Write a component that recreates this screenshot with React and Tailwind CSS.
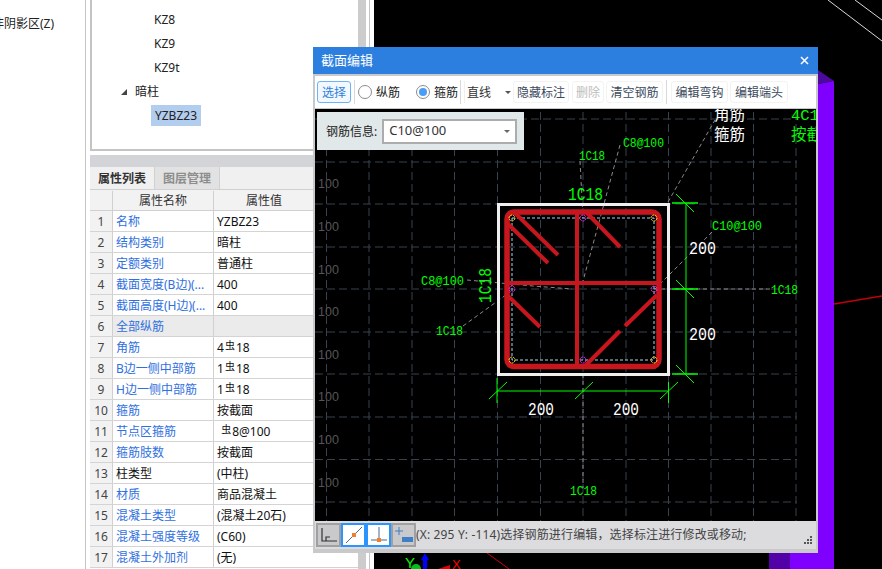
import React from "react";

const sans = "font-['Noto_Sans','Noto_Sans_CJK_SC',sans-serif]";
const cadFont = "'Liberation Mono','Noto Sans CJK SC',monospace";

const Rebar = () => (
  <span className="relative -top-[3px] mx-px text-[10px] leading-none">虫</span>
);

const rows = [
  ["名称", "YZBZ23"],
  ["结构类别", "暗柱"],
  ["定额类别", "普通柱"],
  ["截面宽度(B边)(...", "400"],
  ["截面高度(H边)(...", "400"],
  ["全部纵筋", "", "gray"],
  ["角筋", <>4<Rebar />18</>],
  ["B边一侧中部筋", <>1<Rebar />18</>],
  ["H边一侧中部筋", <>1<Rebar />18</>],
  ["箍筋", "按截面"],
  ["节点区箍筋", <>&nbsp;<Rebar />8@100</>],
  ["箍筋肢数", "按截面"],
  ["柱类型", "(中柱)", "black"],
  ["材质", "商品混凝土"],
  ["混凝土类型", "(混凝土20石)"],
  ["混凝土强度等级", "(C60)"],
  ["混凝土外加剂", "(无)"],
];

const gridX = [326.5, 369, 412, 454.5, 497.5, 540.5, 583, 626, 668.5, 711, 753.5, 796];
const gridY = [119, 162, 204, 247, 289, 332, 374, 417, 459.5, 502];
const sideLabels = [183, 226, 269, 311, 354, 396, 439, 482];

function TreeRow({ children }) {
  return <div className="flex h-6 items-center">{children}</div>;
}

function PropertyPanel() {
  return (
    <div className="flex w-[268px] flex-col">
      <div className="flex-none h-[151px] border-b-2 border-l-2 border-[#c4c4c4] pl-[62px] pt-[8px] text-xs text-[#222]">
        <TreeRow>KZ8</TreeRow>
        <TreeRow>KZ9</TreeRow>
        <TreeRow>KZ9t</TreeRow>
        <TreeRow>
          <span className="-ml-[33px] mr-[8px] h-0 w-0 border-b-[6px] border-l-[6px] border-b-[#444] border-l-transparent" />
          暗柱
        </TreeRow>
        <div className="-ml-[3px] mt-px flex h-[21px] w-[50px] items-center justify-center bg-[#b3cdee]">YZBZ23</div>
      </div>
      <div className="mt-[4px] h-[12px] bg-[#d3d4d8]" />
      <div className="flex h-[23px] border-b border-[#d0d0d0] bg-[#f0f0f0] text-xs font-bold">
        <div className="flex w-[65px] items-center justify-center border-r border-[#d0d0d0] pt-px text-[#333]">属性列表</div>
        <div className="flex w-[65px] items-center justify-center border-r border-[#d0d0d0] bg-[#e2e2e2] pt-px text-[#8d8d8d]">图层管理</div>
      </div>
      <div className="flex h-[21px] border-b border-[#d0d0d0] bg-[#f2f2f2] pt-px text-xs text-[#333]">
        <div className="w-[23px] border-r border-[#d0d0d0]" />
        <div className="flex w-[101px] items-center justify-center border-r border-[#d0d0d0]">属性名称</div>
        <div className="flex w-[100px] items-center justify-center">属性值</div>
      </div>
      {rows.map(([name, value, kind], index) => (
        <div key={index} className="flex h-[21px] flex-none border-b border-[#d4d4d4] text-xs">
          <div className="flex w-[23px] items-center justify-center border-r border-[#d0d0d0] bg-[#f2f2f2] pt-px text-[#444]">
            {index + 1}
          </div>
          <div
            className={`flex w-[101px] items-center whitespace-nowrap border-r border-[#d0d0d0] pl-[3px] pt-px ${
              kind === "black" ? "text-[#111]" : "text-[#2f6fe0]"
            } ${kind === "gray" ? "bg-[#ebebeb]" : ""}`}
          >
            {name}
          </div>
          <div className={`flex flex-1 items-center whitespace-nowrap pl-[3px] pt-px text-[#111] ${kind === "gray" ? "bg-[#ebebeb]" : ""}`}>
            {value}
          </div>
        </div>
      ))}
    </div>
  );
}

function BackScene() {
  return (
    <svg className="h-[569px] w-[508px]" viewBox="374 0 508 569">
      <rect x="374" y="0" width="508" height="569" fill="#000" />
      <line x1="828" y1="0" x2="882" y2="41" stroke="#d8d8d8" />
      <line x1="855" y1="0" x2="882" y2="20" stroke="#d8d8d8" />
      <polygon points="818,70 834,81 818,84" fill="#4a0a9c" />
      <polygon points="818,84 834,81 834,569 818,569" fill="#7f00ff" />
      <rect x="769" y="553" width="21" height="16" fill="#5200a8" />
      <rect x="790" y="553" width="28" height="16" fill="#7f00ff" />
      <line x1="834" y1="304" x2="882" y2="296" stroke="#c00010" strokeWidth="1.5" />
      <line x1="487" y1="553" x2="509" y2="569" stroke="#d00010" />
      <line x1="425" y1="558" x2="425" y2="569" stroke="#0000ff" strokeWidth="4" />
      <polygon points="421,560 429,560 425,553" fill="#0000ff" />
      <circle cx="416" cy="569" r="5" fill="#00c020" />
      <polygon points="438,569 450,569 450,565" fill="#e00000" />
      <text x="405" y="568" fontSize="15" fill="#00ff00" fontFamily="'Liberation Sans',sans-serif">Y</text>
      <text x="452" y="569" fontSize="13" fill="#ff0000" fontFamily="'Liberation Sans',sans-serif">X</text>
    </svg>
  );
}

// CAD labels are stretched to the width they have in the drawing
function CadLabel({ x, y, size = 13.5, fill = "#00ff00", w, children, ...rest }) {
  return (
    <text
      x={x}
      y={y}
      fontSize={size}
      fill={fill}
      fontFamily={cadFont}
      textLength={w}
      lengthAdjust={w ? "spacingAndGlyphs" : undefined}
      {...rest}
    >
      {children}
    </text>
  );
}

function Leader({ points }) {
  return <polyline points={points} fill="none" stroke="#8a8a8a" strokeDasharray="4 3" />;
}

function Section() {
  const red = "#c8161e";
  const diagonals = [
    [515, 213, 558, 255],
    [507, 223, 548, 263],
    [587, 213, 620, 247],
    [507, 295, 540, 327],
    [657, 295, 625, 326],
    [620, 331, 585, 366],
  ];
  return (
    <svg className="block h-[412px] w-[501px] bg-black" viewBox="315 109 501 412">
      {gridX.map((x) => (
        <line key={x} x1={x} y1="112" x2={x} y2="521" stroke="#39404e" strokeDasharray="8 4" />
      ))}
      {gridY.map((y) => (
        <line key={y} x1="315" y1={y} x2="797" y2={y} stroke="#39404e" strokeDasharray="8 4" />
      ))}
      {sideLabels.map((y) => (
        <text key={y} x="318" y={y + 5} fontSize="12.5" fill="#555" fontFamily="'Liberation Sans',sans-serif">100</text>
      ))}

      <Leader points="620,145 583,281" />
      <Leader points="580,161 583,218" />
      <Leader points="668,202 715,120" />
      <Leader points="712,232 655,289" />
      <Leader points="467,280 500,283 533,286 572,289" />
      <Leader points="463,326 510,292" />
      <Leader points="654,289 770,289" />
      <Leader points="583,374 583,488" />

      <rect x="498.5" y="204.5" width="170" height="170" fill="none" stroke="#efefef" strokeWidth="3" />
      <rect x="512" y="218" width="142" height="142" fill="none" stroke="#a8d4f4" strokeDasharray="3 2" />

      <rect x="507" y="212" width="152" height="154.5" rx="7" fill="none" stroke={red} strokeWidth="5.5" />
      <line x1="577" y1="212" x2="577" y2="366" stroke={red} strokeWidth="4" />
      <line x1="507" y1="283" x2="659" y2="283" stroke={red} strokeWidth="4" />
      {diagonals.map(([x1, y1, x2, y2]) => (
        <line key={x1 + "-" + y1} x1={x1} y1={y1} x2={x2} y2={y2} stroke={red} strokeWidth="4" />
      ))}

      {[[512, 218], [654, 218], [512, 360], [654, 360]].map(([cx, cy]) => (
        <circle key={cx + "-" + cy} cx={cx} cy={cy} r="3" fill="none" stroke="#ffdc30" strokeDasharray="2 1" />
      ))}
      {[[583, 218], [512, 289], [654, 289], [583, 360]].map(([cx, cy]) => (
        <circle key={cx + "-" + cy} cx={cx} cy={cy} r="3" fill="none" stroke="#ff20ff" strokeDasharray="2 1" />
      ))}

      <g stroke="#00ff00" fill="none">
        <line x1="686" y1="203" x2="686" y2="374" />
        {[203, 289, 374].map((y) => (
          <g key={y}>
            <line x1="672" y1={y} x2="698" y2={y} strokeWidth="1.5" />
            <line x1="676" y1={y - 9} x2="694" y2={y + 9} />
          </g>
        ))}
        <line x1="497" y1="391" x2="669" y2="391" />
        <line x1="497" y1="378" x2="497" y2="403" />
        <line x1="668.5" y1="382" x2="668.5" y2="403" />
        {[497, 583, 668].map((x) => (
          <line key={x} x1={x - 8} y1="399" x2={x + 10} y2="382" />
        ))}
      </g>

      <CadLabel x="528" y="415" size="18" fill="#fff" w={26}>200</CadLabel>
      <CadLabel x="613" y="415" size="18" fill="#fff" w={26}>200</CadLabel>
      <CadLabel x="689" y="254" size="18" fill="#fff" w={27}>200</CadLabel>
      <CadLabel x="689" y="340" size="18" fill="#fff" w={27}>200</CadLabel>

      <CadLabel x="568" y="200" size="18" w={35}>1C18</CadLabel>
      <CadLabel x="0" y="0" size="18" w={35} transform="translate(491 303) rotate(-90)">1C18</CadLabel>

      <CadLabel x="579" y="160" w={26}>1C18</CadLabel>
      <CadLabel x="623" y="147" w={41}>C8@100</CadLabel>
      <CadLabel x="712" y="230" w={50}>C10@100</CadLabel>
      <CadLabel x="421" y="285" w={43}>C8@100</CadLabel>
      <CadLabel x="436" y="335" w={27}>1C18</CadLabel>
      <CadLabel x="771" y="294" w={27}>1C18</CadLabel>
      <CadLabel x="570" y="495" w={27}>1C18</CadLabel>

      <CadLabel x="714" y="120" size="15.5" fill="#fff">角筋</CadLabel>
      <CadLabel x="714" y="140" size="15.5" fill="#fff">箍筋</CadLabel>
      <CadLabel x="791" y="120" size="15.5">4C18</CadLabel>
      <CadLabel x="791" y="140" size="15.5">按截面</CadLabel>
    </svg>
  );
}

function ToolButton({ children, muted, className = "" }) {
  return (
    <div
      className={`flex h-[22px] items-center justify-center rounded-[3px] border border-[#f3f3f3] pt-px whitespace-nowrap ${
        muted ? "text-[#bdbdbd]" : "text-[#3b4a5c]"
      } ${className}`}
    >
      {children}
    </div>
  );
}

function Radio({ checked, label, className = "" }) {
  return (
    <div className={`flex items-center ${className}`}>
      <span className="flex h-[14px] w-[14px] items-center justify-center rounded-full border border-[#8c8c8c] bg-white">
        {checked && <span className="h-[8px] w-[8px] rounded-full bg-[#4a9df5]" />}
      </span>
      <span className="ml-[4px] pt-px text-[#222]">{label}</span>
    </div>
  );
}

function Toolbar() {
  return (
    <div className="flex h-[32px] items-center bg-white pl-[2px] text-xs">
      <div className="flex h-[22px] w-[34px] items-center justify-center rounded-[3px] border border-[#6fb3f7] bg-[#f2f8ff] pt-px text-[#2f7fdc]">选择</div>
      <div className="ml-[3px] h-[24px] w-px bg-[#d8d8d8]" />
      <Radio label="纵筋" className="ml-[3px]" />
      <Radio checked label="箍筋" className="ml-[16px]" />
      <div className="ml-[2px] h-[24px] w-px bg-[#d8d8d8]" />
      <div className="ml-[3px] flex h-[22px] w-[47px] items-center justify-between border-l border-[#f0f0f0] pl-[2px] pt-px text-[#333]">
        直线
        <span className="h-0 w-0 border-x-[3px] border-t-[3px] border-x-transparent border-t-[#555]" />
      </div>
      <ToolButton className="ml-[2px] w-[56px]">隐藏标注</ToolButton>
      <ToolButton muted className="ml-[3px] w-[32px]">删除</ToolButton>
      <ToolButton className="ml-[2px] w-[57px]">清空钢筋</ToolButton>
      <div className="ml-[3px] h-[24px] w-px bg-[#d8d8d8]" />
      <ToolButton className="ml-[4px] w-[57px]">编辑弯钩</ToolButton>
      <ToolButton className="ml-[2px] w-[58px]">编辑端头</ToolButton>
    </div>
  );
}

function SnapButton({ active, children }) {
  return (
    <div
      className={`flex h-[24px] w-[25px] items-center justify-center border-2 ${
        active ? "border-[#2b95ff] bg-white" : "border-[#a0a0a0] bg-[#c9c9cb]"
      }`}
    >
      <svg width="20" height="20" viewBox="0 0 20 20">{children}</svg>
    </div>
  );
}

function StatusBar() {
  return (
    <div className="flex h-[28px] items-center bg-[#dcdcdf] pl-px text-xs text-[#444]">
      <SnapButton>
        <path d="M3 3V16H18M7 16V12H11" fill="none" stroke="#333" strokeWidth="1.2" />
      </SnapButton>
      <SnapButton active>
        <line x1="2" y1="18" x2="18" y2="2" stroke="#4a6a8a" />
        <rect x="8" y="8" width="4" height="4" fill="#f08030" />
      </SnapButton>
      <SnapButton active>
        <line x1="10" y1="2" x2="10" y2="15" stroke="#4a6a8a" />
        <line x1="2" y1="15" x2="18" y2="15" stroke="#4a6a8a" />
        <rect x="8" y="13" width="4" height="4" fill="#f08030" />
      </SnapButton>
      <SnapButton>
        <path d="M1 6H9M5 2V10" stroke="#3f7fc8" fill="none" />
        <rect x="8" y="12" width="11" height="5" fill="#3f7fc8" />
      </SnapButton>
      <span className="whitespace-nowrap tracking-[0.15px]">(X: 295 Y: -114)选择钢筋进行编辑，选择标注进行修改或移动;</span>
      <div className="ml-auto mr-[4px] mt-[10px] grid grid-cols-3 gap-px">
        {[0, 0, 1, 0, 1, 1, 1, 1, 1].map((on, i) => (
          <span key={i} className={`h-[2px] w-[2px] ${on ? "bg-[#555]" : ""}`} />
        ))}
      </div>
    </div>
  );
}

function SectionDialog() {
  return (
    <div className="absolute left-[313px] top-[47px] flex h-[506px] w-[505px] flex-col bg-[#c9c9cb] text-xs">
      <div className="flex h-[27px] flex-none items-center justify-between bg-[#2d7fdf] pl-[8px] pr-[9px] text-[13px] text-white">
        <span>截面编辑</span>
        <svg width="9" height="9" viewBox="0 0 9 9">
          <path d="M1 1L8 8M8 1L1 8" stroke="#fff" strokeWidth="1.5" />
        </svg>
      </div>
      <div className="mx-[2px] mt-[2px] flex flex-col">
        <Toolbar />
        <div className="relative mt-[1px]">
          <Section />
          <div className="absolute left-[2px] top-[3px] flex h-[38px] w-[207px] items-center bg-[#e1e8ea] pl-[9px] text-[#222]">
            <span className="pt-[2px]">钢筋信息:</span>
            <div className="ml-[5px] flex h-[25px] w-[135px] items-center justify-between border-2 border-[#acacac] bg-white pl-[5px] pr-[5px] text-[13px] text-[#333]">
              C10@100
              <span className="h-0 w-0 border-x-[3px] border-t-[3px] border-x-transparent border-t-[#666]" />
            </div>
          </div>
        </div>
        <StatusBar />
      </div>
    </div>
  );
}

export default function App() {
  return (
    <div className={`relative flex h-[569px] w-[882px] overflow-hidden bg-white ${sans}`}>
      <div className="h-full w-[86px] flex-none overflow-hidden border-r border-[#c4c4c4] pt-[16px]">
        <div className="-ml-[8px] whitespace-nowrap text-xs text-[#222]">非阴影区(Z)</div>
      </div>
      <div className="ml-[4px] flex-none">
        <PropertyPanel />
      </div>
      <div className="h-full w-[8px] flex-none bg-[#cccccc]" />
      <div className="ml-[3px] h-full w-px flex-none bg-[#c4c4c4]" />
      <div className="ml-[4px] flex-none">
        <BackScene />
      </div>
      <SectionDialog />
    </div>
  );
}
